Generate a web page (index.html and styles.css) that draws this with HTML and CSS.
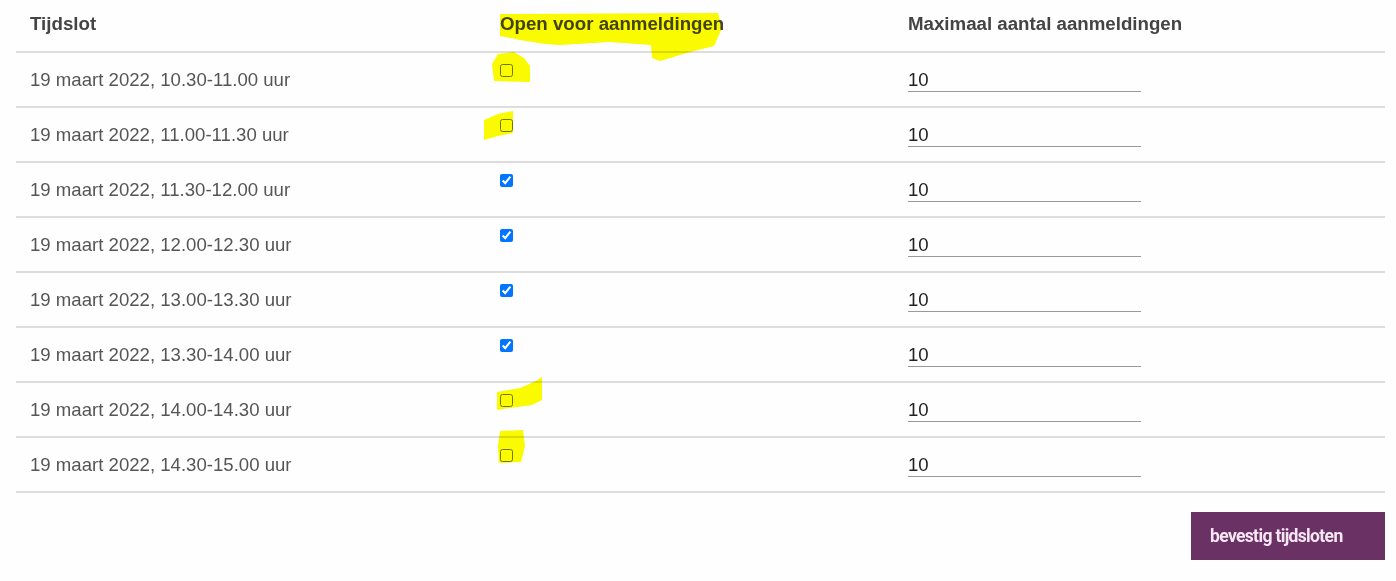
FILE: index.html
```html
<!DOCTYPE html>
<html lang="nl">

<head>
  <meta charset="UTF-8">
  <meta name="viewport" content="width=device-width, initial-scale=1.0">
  <title>Tijdsloten</title>
  <link rel="stylesheet" href="styles.css">
</head>

<body>
  <div class="wrap">
    <table class="slots">
      <colgroup>
        <col class="c-slot">
        <col class="c-open">
        <col class="c-max">
      </colgroup>
      <thead>
        <tr>
          <th>Tijdslot</th>
          <th>Open voor aanmeldingen</th>
          <th>Maximaal aantal aanmeldingen</th>
        </tr>
      </thead>
      <tbody>
        <tr>
          <td>19 maart 2022, 10.30-11.00 uur</td>
          <td class="open"><input type="checkbox"></td>
          <td><input class="max" type="number" value="10"></td>
        </tr>
        <tr>
          <td>19 maart 2022, 11.00-11.30 uur</td>
          <td class="open"><input type="checkbox"></td>
          <td><input class="max" type="number" value="10"></td>
        </tr>
        <tr>
          <td>19 maart 2022, 11.30-12.00 uur</td>
          <td class="open"><input type="checkbox" checked></td>
          <td><input class="max" type="number" value="10"></td>
        </tr>
        <tr>
          <td>19 maart 2022, 12.00-12.30 uur</td>
          <td class="open"><input type="checkbox" checked></td>
          <td><input class="max" type="number" value="10"></td>
        </tr>
        <tr>
          <td>19 maart 2022, 13.00-13.30 uur</td>
          <td class="open"><input type="checkbox" checked></td>
          <td><input class="max" type="number" value="10"></td>
        </tr>
        <tr>
          <td>19 maart 2022, 13.30-14.00 uur</td>
          <td class="open"><input type="checkbox" checked></td>
          <td><input class="max" type="number" value="10"></td>
        </tr>
        <tr>
          <td>19 maart 2022, 14.00-14.30 uur</td>
          <td class="open"><input type="checkbox"></td>
          <td><input class="max" type="number" value="10"></td>
        </tr>
        <tr>
          <td>19 maart 2022, 14.30-15.00 uur</td>
          <td class="open"><input type="checkbox"></td>
          <td><input class="max" type="number" value="10"></td>
        </tr>
      </tbody>
    </table>
    <div class="actions">
      <button class="confirm" type="button">bevestig tijdsloten</button>
    </div>
  </div>

  <!-- markeerstift -->
  <svg class="marker" width="1396" height="581" viewBox="0 0 1396 581">
    <path d="M500,14 L718,13 L722,28 L714,46 L690,52 L660,61 L652,58 L651,45 L610,42 L560,45 L545,44 L520,40 L500,36 Z" />
    <path d="M492,64 L498,54 L514,52 L524,58 L530,66 L530,82 L494,81 Z" />
    <path d="M484,120 L498,114 L513,111 L513,133 L498,136 L484,140 Z" />
    <path d="M497,392 L520,388 L536,381 L542,377 L542,400 L532,405 L510,408 L497,410 Z" />
    <path d="M500,431 L523,430 L525,446 L521,462 L499,463 L498,446 Z" />
  </svg>
</body>

</html>
```

FILE: styles.css
```css
html,
body {
  margin: 0;
  padding: 0;
  background-color: #fefefe;
}

body {
  font-family: "Liberation Sans", Arial, sans-serif;
  color: #555;
}

.wrap {
  padding: 0 11px 0 16px;
}

table.slots {
  width: 100%;
  border-collapse: collapse;
  table-layout: fixed;
}

col.c-slot {
  width: 470px;
}

col.c-open {
  width: 408px;
}

table.slots th {
  text-align: left;
  font-size: 18.7px;
  line-height: 21px;
  font-weight: bold;
  color: #444;
  padding: 13px 14px 17px;
  border-bottom: 2px solid #dddddd;
}

table.slots td {
  font-size: 18.6px;
  line-height: 21px;
  padding: 14px 14px;
  border-bottom: 2px solid #dddddd;
  vertical-align: middle;
}

table.slots td.open {
  vertical-align: top;
  padding-top: 11px;
}

td.open input {
  display: block;
  margin: 0;
  width: 13px;
  height: 13px;
}

input.max {
  display: block;
  width: 233px;
  height: 25px;
  box-sizing: border-box;
  border: none;
  border-bottom: 1px solid #999;
  background: transparent;
  padding: 1px 0 0;
  font-family: "Liberation Sans", Arial, sans-serif;
  font-size: 18.6px;
  color: #222;
  outline: none;
}

.actions {
  display: flex;
  justify-content: flex-end;
  margin-top: 19px;
}

button.confirm {
  width: 194px;
  height: 48px;
  border: none;
  background-color: #6a3164;
  color: #f6e6f2;
  font-family: Roboto, sans-serif;
  font-weight: bold;
  font-size: 17.5px;
  letter-spacing: -0.65px;
  text-align: left;
  padding: 0 0 0 19px;
}

svg.marker {
  position: absolute;
  left: 0;
  top: 0;
  pointer-events: none;
  mix-blend-mode: multiply;
  fill: #fbfb00;
}
```
